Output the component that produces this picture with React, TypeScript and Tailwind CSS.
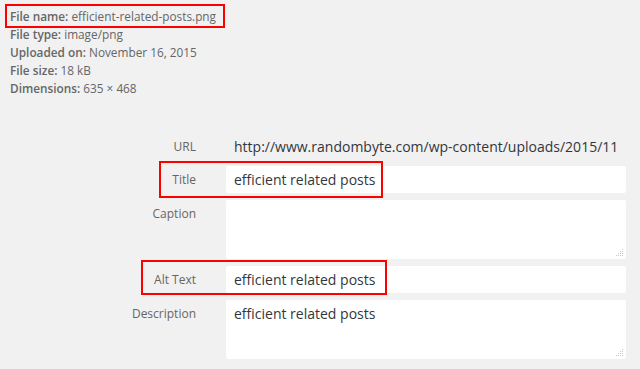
import React from "react";

const meta: [string, string][] = [
  ["File name:", "efficient-related-posts.png"],
  ["File type:", "image/png"],
  ["Uploaded on:", "November 16, 2015"],
  ["File size:", "18 kB"],
  ["Dimensions:", "635 × 468"],
];

function Mark({ className }: { className: string }) {
  return <span className={`pointer-events-none absolute border-2 border-[#ff0000] ${className}`} />;
}

function Grip() {
  return (
    <svg className="absolute right-[2px] bottom-[2px]" width="9" height="9" viewBox="0 0 9 9">
      <g fill="#c8c8c8">
        <rect x="7" y="1" width="1" height="1" />
        <rect x="5" y="3" width="1" height="1" />
        <rect x="7" y="3" width="1" height="1" />
        <rect x="3" y="5" width="1" height="1" />
        <rect x="5" y="5" width="1" height="1" />
        <rect x="7" y="5" width="1" height="1" />
        <rect x="1" y="7" width="1" height="1" />
        <rect x="3" y="7" width="1" height="1" />
        <rect x="5" y="7" width="1" height="1" />
        <rect x="7" y="7" width="1" height="1" />
      </g>
    </svg>
  );
}

export default function App() {
  return (
    <div className="relative h-[369px] w-[640px] overflow-hidden bg-[#f1f1f1] font-['Open_Sans',sans-serif] text-[#666]">
      <div className="pl-[10px] pt-[7px] text-[11.8px] leading-[18px]">
        {meta.map(([k, v], i) => (
          <div key={k}>
            <span className="relative">
              <strong className="font-semibold">{k}</strong> {v}
              {i === 0 && <Mark className="-left-[5px] -top-[4px] -right-[9px] -bottom-[4px]" />}
            </span>
          </div>
        ))}
      </div>

      <div className="mt-[39px] flex flex-col gap-[7px]">
        <div className="mb-[2px] grid grid-cols-[196px_400px] items-center gap-x-[30px]">
          <span className="text-right text-[12px]">URL</span>
          <span className="whitespace-nowrap pl-[8px] text-[14px] text-[#32373c]">
            http://www.randombyte.com/wp-content/uploads/2015/11
          </span>
        </div>

        <div className="relative grid grid-cols-[196px_400px] items-center gap-x-[30px]">
          <span className="text-right text-[12px]">Title</span>
          <div className="flex h-[27px] items-center rounded-[2px] bg-white pl-[8px] text-[14px] text-[#32373c]">
            efficient related posts
          </div>
          <Mark className="left-[159px] -top-[5px] w-[224px] -bottom-[5px]" />
        </div>

        <div className="grid grid-cols-[196px_400px] items-start gap-x-[30px]">
          <span className="pt-[5px] text-right text-[12px]">Caption</span>
          <div className="relative h-[59px] rounded-[2px] bg-white">
            <Grip />
          </div>
        </div>

        <div className="relative grid grid-cols-[196px_400px] items-center gap-x-[30px]">
          <span className="text-right text-[12px]">Alt Text</span>
          <div className="flex h-[27px] items-center rounded-[2px] bg-white pl-[8px] text-[14px] text-[#32373c]">
            efficient related posts
          </div>
          <Mark className="left-[141px] -top-[6px] w-[246px] -bottom-[2px]" />
        </div>

        <div className="grid grid-cols-[196px_400px] items-start gap-x-[30px]">
          <span className="pt-[5px] text-right text-[12px]">Description</span>
          <div className="relative h-[59px] rounded-[2px] bg-white pl-[8px] pt-[3px] text-[14px] text-[#32373c]">
            efficient related posts
            <Grip />
          </div>
        </div>
      </div>
    </div>
  );
}
